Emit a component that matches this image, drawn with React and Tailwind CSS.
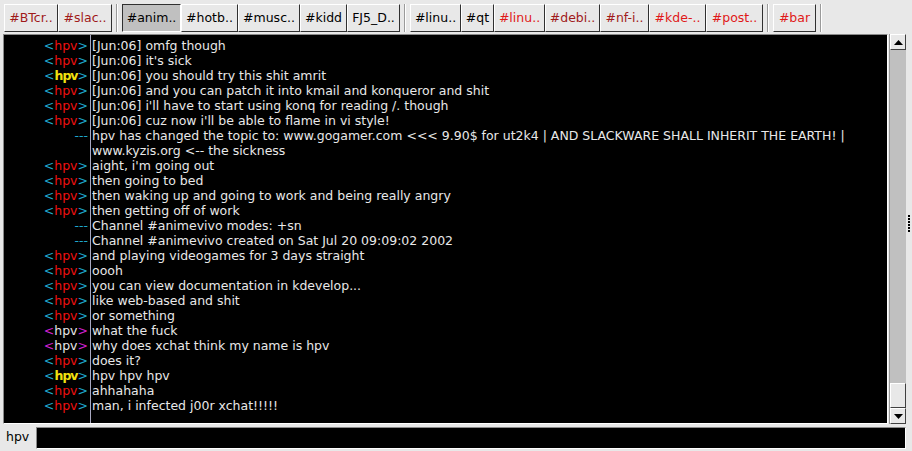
import React from 'react'

// channel tabs, separators marked with null
const TABS = [
  { label: '#BTcr..', w: 54, color: 'text-[#a01a1a]' },
  { label: '#slac..', w: 54, color: 'text-[#a01a1a]' },
  null,
  { label: '#anim..', w: 59, color: 'text-black', active: true },
  { label: '#hotb..', w: 57, color: 'text-black' },
  { label: '#musc..', w: 62, color: 'text-black' },
  { label: '#kidd', w: 47, color: 'text-black' },
  { label: 'FJ5_D..', w: 53, color: 'text-black' },
  null,
  { label: '#linu..', w: 51, color: 'text-black' },
  { label: '#qt', w: 33, color: 'text-black' },
  { label: '#linu..', w: 51, color: 'text-[#e01818]' },
  { label: '#debi..', w: 55, color: 'text-[#a01a1a]' },
  { label: '#nf-i..', w: 49, color: 'text-[#a01a1a]' },
  { label: '#kde-..', w: 57, color: 'text-[#e01818]' },
  { label: '#post..', w: 57, color: 'text-[#e01818]' },
  null,
  { label: '#bar', w: 43, color: 'text-[#e01818]' },
  null,
]

// n = normal, h = highlighted, m = magenta brackets, s = server, c = continuation
const LINES = [
  ['n', '[Jun:06] omfg though'],
  ['n', "[Jun:06] it's sick"],
  ['h', '[Jun:06] you should try this shit amrit'],
  ['n', '[Jun:06] and you can patch it into kmail and konqueror and shit'],
  ['n', "[Jun:06] i'll have to start using konq for reading /. though"],
  ['n', "[Jun:06] cuz now i'll be able to flame in vi style!"],
  ['s', 'hpv has changed the topic to: www.gogamer.com <<< 9.90$ for ut2k4 | AND SLACKWARE SHALL INHERIT THE EARTH! |'],
  ['c', 'www.kyzis.org <-- the sickness'],
  ['n', "aight, i'm going out"],
  ['n', 'then going to bed'],
  ['n', 'then waking up and going to work and being really angry'],
  ['n', 'then getting off of work'],
  ['s', 'Channel #animevivo modes: +sn'],
  ['s', 'Channel #animevivo created on Sat Jul 20 09:09:02 2002'],
  ['n', 'and playing videogames for 3 days straight'],
  ['n', 'oooh'],
  ['n', 'you can view documentation in kdevelop...'],
  ['n', 'like web-based and shit'],
  ['n', 'or something'],
  ['m', 'what the fuck'],
  ['m', 'why does xchat think my name is hpv'],
  ['n', 'does it?'],
  ['h', 'hpv hpv hpv'],
  ['n', 'ahhahaha'],
  ['n', 'man, i infected j00r xchat!!!!!'],
]

function Nick({ kind }) {
  if (kind === 's') return <span className="text-[#1fa8cc]">---</span>
  if (kind === 'c') return null
  if (kind === 'm') {
    return (
      <span>
        <span className="text-[#d020d0]">&lt;</span>
        <span className="text-[#e8e8e8]">hpv</span>
        <span className="text-[#d020d0]">&gt;</span>
      </span>
    )
  }
  return (
    <span>
      <span className="text-[#1fa8cc]">&lt;</span>
      {kind === 'h'
        ? <span className="text-[#f0e010] font-bold tracking-[-1px]">hpv</span>
        : <span className="text-[#f01010]">hpv</span>}
      <span className="text-[#1fa8cc]">&gt;</span>
    </span>
  )
}

function Tab({ tab }) {
  return (
    <div
      className={`h-[28px] flex items-center justify-center shrink-0 border text-[12.5px] ${tab.color} ${
        tab.active
          ? 'bg-[#c0c0c0] border-t-[#303030] border-l-[#303030] border-b-white border-r-white'
          : 'bg-[#e8e8e8] border-t-white border-l-white border-b-[#303030] border-r-[#303030]'
      }`}
      style={{ width: tab.w }}
    >
      {tab.label}
    </div>
  )
}

function Sep() {
  return (
    <div className="w-[10px] h-[28px] flex justify-center shrink-0">
      <div className="w-[2px] h-full border-l border-l-[#9a9a9a] border-r border-r-white" />
    </div>
  )
}

export default function App() {
  return (
    <div className="w-[912px] h-[451px] bg-[#e8e8e8] flex flex-col overflow-hidden font-['DejaVu_Sans',sans-serif]">
      {/* tab bar */}
      <div className="h-[34px] flex pt-[4px] pl-[4px]">
        {TABS.map((t, i) => (t ? <Tab key={i} tab={t} /> : <Sep key={i} />))}
      </div>

      {/* chat + scrollbar */}
      <div className="flex h-[390px] pl-[3px]">
        <div className="w-[885px] h-full border border-t-[#8a8a8a] border-l-[#8a8a8a] border-b-white border-r-white bg-black flex">
          <div className="w-[84px] pt-[3px] flex flex-col items-end text-[12.5px] leading-[15px]">
            {LINES.map((l, i) => (
              <div key={i} className="h-[15px] whitespace-nowrap"><Nick kind={l[0]} /></div>
            ))}
          </div>
          <div className="w-[1px] ml-[2px] h-full bg-[#a8a8c0]" />
          <div className="flex-1 pl-[1px] pt-[3px] text-[12.5px] leading-[15px] text-[#e8e8e8] whitespace-nowrap">
            {LINES.map((l, i) => (
              <div key={i} className="h-[15px]">{l[1]}</div>
            ))}
          </div>
        </div>
        <div className="w-[17px] h-full ml-[1px] bg-[#c0c0c0] border-l border-l-[#9a9a9a] flex flex-col">
          <div className="h-[16px] bg-[#e8e8e8] border border-t-white border-l-white border-b-[#404040] border-r-[#404040] flex items-center justify-center">
            <svg width="9" height="5" viewBox="0 0 9 5"><path d="M0 5 L4.5 0 L9 5 Z" fill="#000" /></svg>
          </div>
          <div className="flex-1" />
          <div className="h-[25px] bg-[#e8e8e8] border border-t-white border-l-white border-b-[#404040] border-r-[#404040]" />
          <div className="h-[16px] bg-[#e8e8e8] border border-t-white border-l-white border-b-[#404040] border-r-[#404040] flex items-center justify-center">
            <svg width="9" height="5" viewBox="0 0 9 5"><path d="M0 0 L4.5 5 L9 0 Z" fill="#000" /></svg>
          </div>
        </div>
        <div className="flex-1 flex items-center justify-center">
          <div className="flex flex-col gap-[1px] mt-[-12px]">
            {[0, 1, 2, 3, 4, 5].map(i => (
              <div key={i} className="w-[2px] h-[2px] bg-black" />
            ))}
          </div>
        </div>
      </div>

      {/* input row */}
      <div className="flex items-center h-[27px] pl-[6px]">
        <span className="text-[12.5px] text-black w-[30px]">hpv</span>
        <div className="w-[870px] h-[22px] bg-black border border-t-[#8a8a8a] border-l-[#8a8a8a] border-b-white border-r-white" />
      </div>
    </div>
  )
}
